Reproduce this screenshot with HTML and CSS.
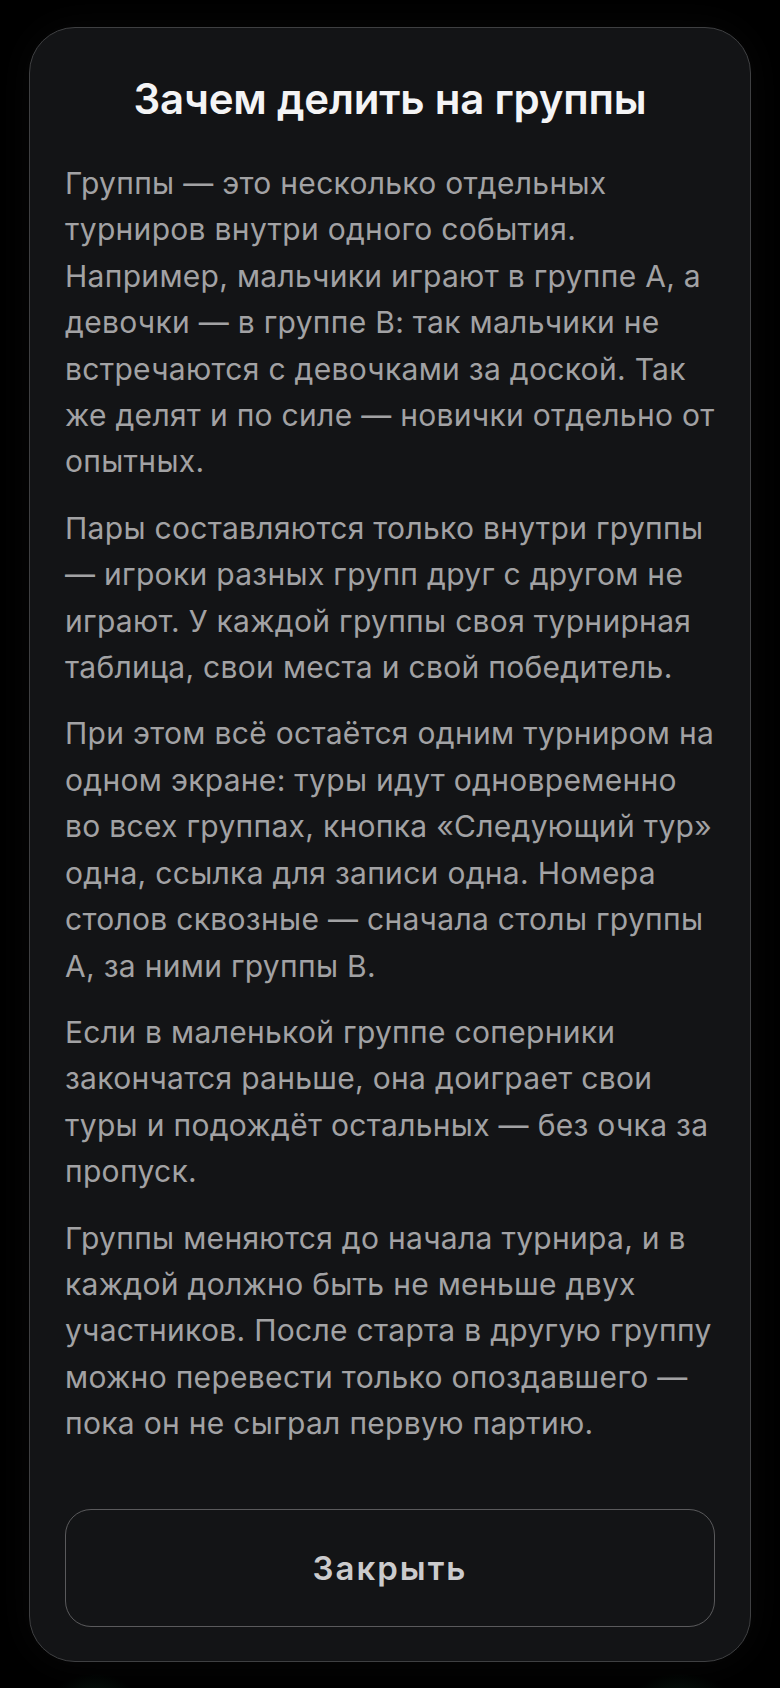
FILE: index.html
```html
<!DOCTYPE html>
<html lang="ru">
<head>
<meta charset="utf-8">
<title>Зачем делить на группы</title>
<link rel="stylesheet" href="styles.css">
</head>
<body>
  <div class="backdrop">
    <section class="sheet" role="dialog" aria-labelledby="sheet-title">
      <h1 class="sheet-title" id="sheet-title">Зачем делить на группы</h1>
      <div class="sheet-body">
        <p>Группы — это несколько отдельных турниров внутри одного события. Например, мальчики играют в группе А, а девочки — в группе В: так мальчики не встречаются с девочками за доской. Так же делят и по силе — новички отдельно от опытных.</p>
        <p>Пары составляются только внутри группы — игроки разных групп друг с другом не играют. У каждой группы своя турнирная таблица, свои места и свой победитель.</p>
        <p>При этом всё остаётся одним турниром на одном экране: туры идут одновременно во всех группах, кнопка «Следующий тур» одна, ссылка для записи одна. Номера столов сквозные — сначала столы группы А, за ними группы В.</p>
        <p>Если в маленькой группе соперники закончатся раньше, она доиграет свои туры и подождёт остальных — без очка за пропуск.</p>
        <p>Группы меняются до начала турнира, и в каждой должно быть не меньше двух участников. После старта в другую группу можно перевести только опоздавшего — пока он не сыграл первую партию.</p>
      </div>
      <button class="sheet-close" type="button">Закрыть</button>
    </section>
  </div>
</body>
</html>
```

FILE: styles.css
```css
html, body {
  margin: 0;
  padding: 0;
  height: 100%;
}

body {
  background:
    radial-gradient(ellipse 60px 40px at 95px 1700px, rgba(20, 60, 40, 0.35), transparent 70%),
    radial-gradient(ellipse 70px 40px at 680px 1700px, rgba(20, 60, 40, 0.35), transparent 70%),
    #000;
  font-family: Inter, "Noto Sans", "DejaVu Sans", sans-serif;
  -webkit-font-smoothing: antialiased;
}

.backdrop {
  padding: 27px 29px;
  box-sizing: border-box;
}

.sheet {
  background: #131416;
  border: 1px solid #3f4042;
  border-radius: 46px;
  padding: 46px 35px 34px;
  display: flex;
  flex-direction: column;
  box-shadow: 0 0 40px rgba(255, 255, 255, 0.03);
}

.sheet-title {
  margin: 0;
  text-align: center;
  color: #f4f4f5;
  font-size: 42px;
  line-height: 50px;
  font-weight: 600;
  letter-spacing: -0.2px;
}

.sheet-body {
  margin-top: 36px;
  color: #a2a2a4;
  font-size: 30px;
  line-height: 46.4px;
  letter-spacing: 0.3px;
}

.sheet-body p {
  margin: 0 0 20px;
}

.sheet-body p:last-child {
  margin-bottom: 0;
}

.sheet-close {
  margin-top: 62px;
  height: 118px;
  border: 1.5px solid #5a5a5c;
  border-radius: 26px;
  background: transparent;
  color: #cbcbcd;
  font-family: inherit;
  font-size: 33px;
  font-weight: 600;
  letter-spacing: 2px;
  cursor: pointer;
}
```
